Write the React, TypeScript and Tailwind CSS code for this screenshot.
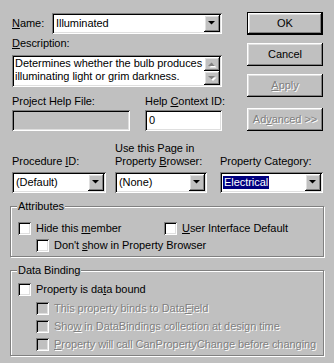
import React from 'react';

const SUNKEN = 'shadow-[inset_1px_1px_0_#808080,inset_-1px_-1px_0_#fff,inset_2px_2px_0_#000,inset_-2px_-2px_0_#dfdfdf]';
const RAISED = 'shadow-[inset_-1px_-1px_0_#000,inset_1px_1px_0_#fff,inset_-2px_-2px_0_#808080,inset_2px_2px_0_#dfdfdf]';
const DISABLED = 'text-[#808080] [text-shadow:1px_1px_0_#fff]';

const Arrow = ({ disabled = false, up = false }: { disabled?: boolean; up?: boolean }) => (
    <svg width="8" height="5" viewBox="0 0 8 5" className={disabled ? 'overflow-visible' : ''}>
        {disabled && <polygon points={up ? '1,5 8,5 4.5,1.5' : '1,1 8,1 4.5,4.5'} fill="#fff" transform="translate(0.5,0.5)" />}
        <polygon points={up ? '0,4 7,4 3.5,0.5' : '0,0 7,0 3.5,3.5'} fill={disabled ? '#808080' : '#000'} />
    </svg>
);

const Combo = ({ width, children }: { width: string; children: React.ReactNode }) => (
    <div className={`flex h-[21px] ${width} bg-white p-[2px] ${SUNKEN}`}>
        <div className="flex-1 flex items-center pl-[2px] leading-[13px] whitespace-nowrap overflow-hidden">{children}</div>
        <div className={`w-[16px] h-full bg-[#c0c0c0] flex items-center justify-center ${RAISED}`}>
            <Arrow />
        </div>
    </div>
);

const Button = ({ children, isDefault = false, disabled = false }: { children: React.ReactNode; isDefault?: boolean; disabled?: boolean }) => (
    <div className={`w-[76px] h-[23px] flex items-center justify-center ${isDefault ? 'border border-black' : ''}`}>
        <div className={`w-full h-full flex items-center justify-center ${RAISED} ${disabled ? DISABLED : ''}`}>{children}</div>
    </div>
);

const Check = ({ disabled = false, children }: { disabled?: boolean; children: React.ReactNode }) => (
    <div className="flex items-center h-[13px] gap-[5px]">
        <div className={`w-[13px] h-[13px] shrink-0 ${disabled ? 'bg-[#c0c0c0]' : 'bg-white'} ${SUNKEN}`} />
        <span className={`leading-[13px] whitespace-nowrap ${disabled ? DISABLED : ''}`}>{children}</span>
    </div>
);

const Group = ({ title, className, children }: { title: string; className: string; children: React.ReactNode }) => (
    <div className={`relative ml-[10px] w-[314px] border border-[#808080] shadow-[inset_1px_1px_0_#fff,1px_1px_0_#fff] ${className}`}>
        <span className="absolute -top-[7px] left-[6px] px-[1px] bg-[#c0c0c0] leading-[13px]">{title}</span>
        {children}
    </div>
);

export default function App() {
    return (
        <div className="w-[334px] h-[363px] bg-[#c0c0c0] text-black text-[11px] tracking-[-0.05px] font-['Liberation_Sans',Arial,sans-serif] overflow-hidden">
            <div className="flex pl-[12px] pt-[12px]">
                {/* left column */}
                <div className="w-[210px] pt-[1px]">
                    <div className="flex items-center h-[21px]">
                        <span className="w-[40px] leading-[13px]"><u>N</u>ame:</span>
                        <Combo width="w-[170px]">Illuminated</Combo>
                    </div>
                    <div className="mt-[3px] leading-[13px]"><u>D</u>escription:</div>
                    <div className={`mt-[5px] h-[32px] flex bg-white p-[2px] ${SUNKEN}`}>
                        <div className="flex-1 pl-[1px] leading-[13px]">
                            Determines whether the bulb produces<br />illuminating light or grim darkness.
                        </div>
                        <div className="w-[16px] flex flex-col">
                            <div className={`h-[14px] bg-[#c0c0c0] flex items-center justify-center ${RAISED}`}><Arrow disabled up /></div>
                            <div className={`h-[14px] bg-[#c0c0c0] flex items-center justify-center ${RAISED}`}><Arrow disabled /></div>
                        </div>
                    </div>
                    <div className="mt-[8px] flex gap-[15px]">
                        <div className="w-[118px]">
                            <div className="leading-[13px]">Project Help File:</div>
                            <div className={`mt-[2px] h-[21px] bg-[#c0c0c0] ${SUNKEN}`} />
                        </div>
                        <div className="w-[77px]">
                            <div className="leading-[13px] whitespace-nowrap">Help <u>C</u>ontext ID:</div>
                            <div className={`mt-[2px] h-[21px] bg-white p-[2px] pl-[4px] flex items-center leading-[13px] ${SUNKEN}`}>0</div>
                        </div>
                    </div>
                </div>
                {/* buttons */}
                <div className="ml-[25px] flex flex-col">
                    <Button isDefault>OK</Button>
                    <div className="mt-[8px]"><Button>Cancel</Button></div>
                    <div className="mt-[8px]"><Button disabled><span><u>A</u>pply</span></Button></div>
                    <div className="mt-[11px]"><Button disabled><span>Ad<u>v</u>anced &gt;&gt;</span></Button></div>
                </div>
            </div>

            <div className="mt-[11px] flex pl-[12px] gap-[9px] items-end">
                <div className="w-[94px]">
                    <div className="leading-[13px]">Procedure <u>I</u>D:</div>
                    <div className="mt-[4px]"><Combo width="w-[94px]">(Default)</Combo></div>
                </div>
                <div className="w-[92px]">
                    <div className="leading-[13px] whitespace-nowrap">Use this Page in<br />Property <u>B</u>rowser:</div>
                    <div className="mt-[4px]"><Combo width="w-[92px]">(None)</Combo></div>
                </div>
                <div className="w-[103px] ml-[4px]">
                    <div className="leading-[13px] whitespace-nowrap">Property Category:</div>
                    <div className="mt-[4px]">
                        <Combo width="w-[103px]">
                            <span className="-ml-[1px] px-[1px] bg-[#000080] text-white">Electrical</span>
                        </Combo>
                    </div>
                </div>
            </div>

            <Group title="Attributes" className="mt-[13px] h-[51px] pt-[15px] pl-[7px]">
                <div className="flex flex-col gap-[4px]">
                    <div className="flex">
                        <div className="w-[146px]"><Check>Hide this <u>m</u>ember</Check></div>
                        <Check><u>U</u>ser Interface Default</Check>
                    </div>
                    <div className="pl-[18px]"><Check>Don't <u>s</u>how in Property Browser</Check></div>
                </div>
            </Group>

            <Group title="Data Binding" className="mt-[13px] h-[86px] pt-[12px] pl-[7px]">
                <Check>Property is da<u>t</u>a bound</Check>
                <div className="pl-[18px] mt-[6px] flex flex-col gap-[5px]">
                    <Check disabled>This property binds to Data<u>F</u>ield</Check>
                    <Check disabled>Sho<u>w</u> in DataBindings collection at design time</Check>
                    <Check disabled><u>P</u>roperty will call CanPropertyChange before changing</Check>
                </div>
            </Group>
        </div>
    );
}
